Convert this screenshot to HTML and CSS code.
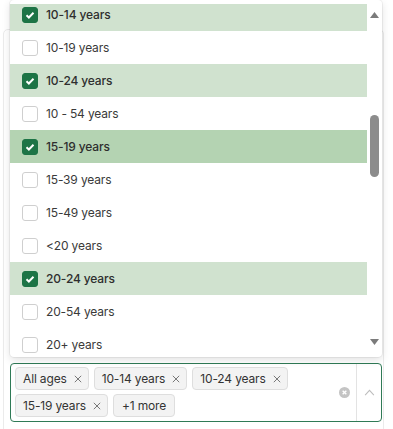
FILE: index.html
```html
<!DOCTYPE html>
<html lang="en">
<head>
    <meta charset="UTF-8">
    <meta name="viewport" content="width=device-width, initial-scale=1.0">
    <title>Age groups</title>
    <link rel="stylesheet" href="styles.css">
</head>
<body>
    <div class="card">
        <div class="select">
            <div class="menu">
                <div class="options">
                    <div class="option-list">
                        <div class="option selected"><span class="box checked"><svg viewBox="0 0 16 16"><path d="M4 8.3l2.7 2.6L12 5.4"/></svg></span>10-14 years</div>
                        <div class="option"><span class="box"></span>10-19 years</div>
                        <div class="option selected"><span class="box checked"><svg viewBox="0 0 16 16"><path d="M4 8.3l2.7 2.6L12 5.4"/></svg></span>10-24 years</div>
                        <div class="option"><span class="box"></span>10 - 54 years</div>
                        <div class="option selected focused"><span class="box checked"><svg viewBox="0 0 16 16"><path d="M4 8.3l2.7 2.6L12 5.4"/></svg></span>15-19 years</div>
                        <div class="option"><span class="box"></span>15-39 years</div>
                        <div class="option"><span class="box"></span>15-49 years</div>
                        <div class="option"><span class="box"></span>&lt;20 years</div>
                        <div class="option selected"><span class="box checked"><svg viewBox="0 0 16 16"><path d="M4 8.3l2.7 2.6L12 5.4"/></svg></span>20-24 years</div>
                        <div class="option"><span class="box"></span>20-54 years</div>
                        <div class="option"><span class="box"></span>20+ years</div>
                    </div>
                </div>
                <div class="scrollbar">
                    <div class="arrow"><svg viewBox="0 0 9 6"><path d="M4.5 0L9 6H0z"/></svg></div>
                    <div class="track"><div class="thumb"></div></div>
                    <div class="arrow"><svg viewBox="0 0 9 6"><path d="M0 0h9L4.5 6z"/></svg></div>
                </div>
            </div>
            <div class="control">
                <div class="values">
                    <span class="chip">All ages<svg class="remove" viewBox="0 0 10 10"><path d="M1 1l8 8M9 1l-8 8"/></svg></span>
                    <span class="chip">10-14 years<svg class="remove" viewBox="0 0 10 10"><path d="M1 1l8 8M9 1l-8 8"/></svg></span>
                    <span class="chip">10-24 years<svg class="remove" viewBox="0 0 10 10"><path d="M1 1l8 8M9 1l-8 8"/></svg></span>
                    <span class="chip">15-19 years<svg class="remove" viewBox="0 0 10 10"><path d="M1 1l8 8M9 1l-8 8"/></svg></span>
                    <span class="chip more">+1 more</span>
                </div>
                <div class="indicators">
                    <div class="clear"><svg viewBox="0 0 12 12"><circle cx="6" cy="6" r="6"/><path d="M4 4l4 4M8 4l-4 4"/></svg></div>
                    <div class="separator"></div>
                    <div class="toggle"><svg viewBox="0 0 12 8"><path d="M1 7l5-5.5L11 7"/></svg></div>
                </div>
            </div>
        </div>
    </div>
</body>
</html>
```

FILE: styles.css
```css
body {
    margin: 0;
    font-family: Inter, "Liberation Sans", sans-serif;
    color: #333;
    background-color: #fff;
    height: 429px;
    overflow: hidden;
}
.card {
    margin: 29px 0 0 3px;
    width: 381px;
    height: 420px;
    border: 1px solid #ebebeb;
    border-radius: 5px;
    padding: 333px 1px 0 6px;
    box-sizing: border-box;
}
.select {
    position: relative;
}
.menu {
    position: absolute;
    left: 0;
    right: 0;
    bottom: 100%;
    margin-bottom: 6px;
    height: 357px;
    box-sizing: border-box;
    padding: 4px 0;
    background-color: #fff;
    border-radius: 4px;
    box-shadow: 0 0 0 1px rgba(0, 0, 0, 0.05), 0 3px 8px rgba(0, 0, 0, 0.12);
    display: flex;
}
.options {
    flex: 1;
    overflow: hidden;
}
.option-list {
    margin-top: -6px;
}
.option {
    height: 33px;
    display: flex;
    align-items: center;
    gap: 8px;
    padding-left: 12px;
    font-size: 12px;
    letter-spacing: -0.15px;
    color: #3a3a3a;
}
.option.selected {
    background-color: #d0e2cf;
    font-weight: 500;
    color: #2e2e2e;
}
.option.focused {
    background-color: #b4d3b2;
}
.box {
    width: 16px;
    height: 16px;
    box-sizing: border-box;
    border: 1px solid #cfcfcf;
    border-radius: 3px;
    background-color: #fff;
    flex-shrink: 0;
}
.box.checked {
    background-color: #1d7446;
    border-color: #1d7446;
}
.box svg {
    display: block;
    width: 14px;
    height: 14px;
    fill: none;
    stroke: #fff;
    stroke-width: 2.2;
}
.scrollbar {
    width: 15px;
    display: flex;
    flex-direction: column;
}
.arrow {
    height: 22px;
    display: flex;
    align-items: center;
    justify-content: center;
}
.arrow svg {
    width: 9px;
    height: 6px;
    fill: #7b7b7b;
}
.track {
    flex: 1;
}
.thumb {
    margin: 89px auto 0;
    width: 9px;
    height: 62px;
    border-radius: 5px;
    background-color: #8c8c8c;
}
.control {
    height: 59px;
    box-sizing: border-box;
    border: 1px solid #2f7a56;
    border-radius: 4px;
    display: flex;
}
.values {
    flex: 1;
    display: flex;
    flex-wrap: wrap;
    align-content: flex-start;
    gap: 4px 5px;
    padding: 3px 4px;
}
.chip {
    height: 23px;
    box-sizing: border-box;
    display: inline-flex;
    align-items: center;
    padding: 0 6px 0 7px;
    font-size: 12px;
    letter-spacing: -0.15px;
    color: #333;
    background-color: #f3f3f3;
    border: 1px solid #dedede;
    border-radius: 4px;
}
.chip.more {
    padding: 0 8px;
}
.remove {
    margin-left: 7px;
    width: 8px;
    height: 8px;
    fill: none;
    stroke: #666;
    stroke-width: 1.1;
}
.indicators {
    display: flex;
    align-items: center;
}
.clear {
    width: 24px;
    display: flex;
    justify-content: center;
}
.clear svg {
    width: 11px;
    height: 11px;
}
.clear circle {
    fill: #c4c4c4;
}
.clear path {
    stroke: #fff;
    stroke-width: 1.5;
}
.separator {
    align-self: stretch;
    width: 1px;
    background-color: #e3e3e3;
}
.toggle {
    width: 24px;
    display: flex;
    justify-content: center;
}
.toggle svg {
    width: 11px;
    height: 7px;
    fill: none;
    stroke: #bdbdbd;
    stroke-width: 1.2;
}
```
